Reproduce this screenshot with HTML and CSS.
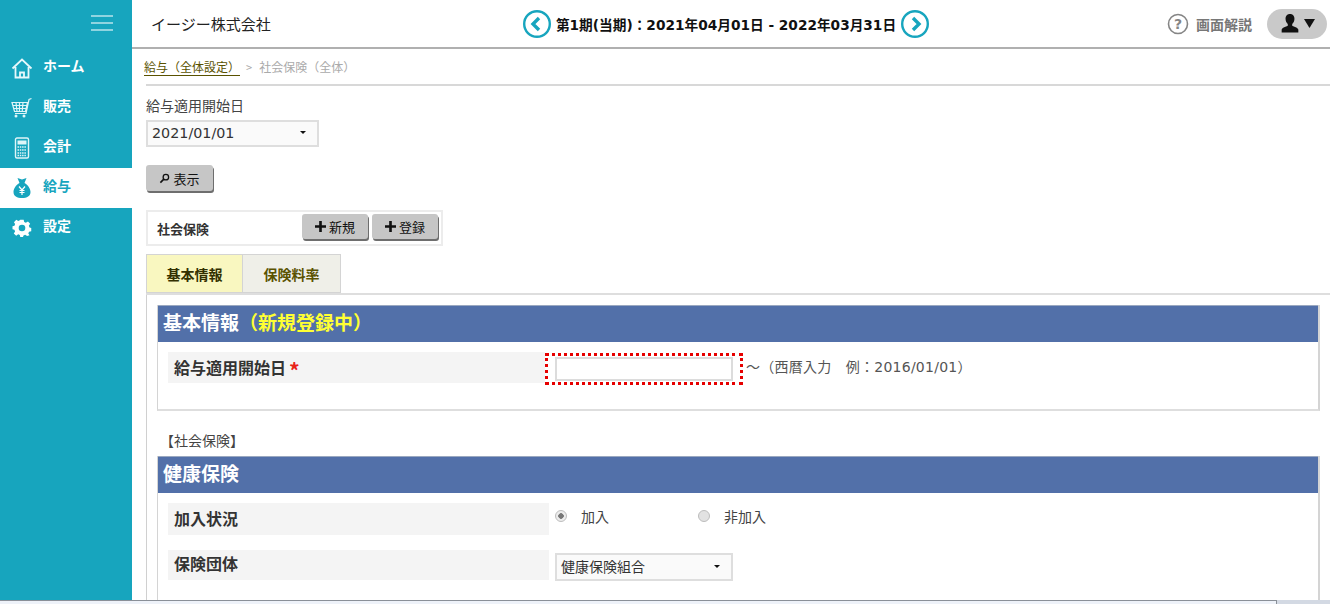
FILE: index.html
```html
<!DOCTYPE html>
<html lang="ja">
<head>
<meta charset="utf-8">
<title>社会保険</title>
<link rel="stylesheet" href="styles.css">
</head>
<body>
<div class="app">
  <nav class="sidebar">
    <div class="burger"><span></span><span></span><span></span></div>
    <ul class="menu">
      <li class="menu-item">
        <svg class="menu-icon" viewBox="0 0 22 22"><path d="M1.5 11.5 11 2.5l9.500 9M4.500 10v10.500h13V10M9 20.500v-5h4v5" fill="none" stroke="#e6f8fb" stroke-width="1.800"/></svg>
        <span>ホーム</span>
      </li>
      <li class="menu-item">
        <svg class="menu-icon" viewBox="0 0 22 22"><path d="M1 5.500h15.500l-2 9H3.500zM20.500 1.500 18 2.500l-3 14H4M5 5.500l1 9M8.500 5.500v9M12 5.500l-.8 9M2 8.500h14M2.800 11.500h12.500" fill="none" stroke="#dff5f8" stroke-width="1.200"/><circle cx="5" cy="19" r="1.500" fill="#dff5f8"/><circle cx="13" cy="19" r="1.500" fill="#dff5f8"/></svg>
        <span>販売</span>
      </li>
      <li class="menu-item">
        <svg class="menu-icon" viewBox="0 0 22 22"><rect x="4.500" y="1" width="13" height="20" rx="1.500" fill="none" stroke="#dff5f8" stroke-width="1.400"/><rect x="6.500" y="3.500" width="9" height="4" fill="#dff5f8"/><path d="M6.500 10h9M6.500 13h9M6.500 16h9M6.500 18.500h9" stroke="#dff5f8" stroke-width="1.300" stroke-dasharray="1.500 .8"/></svg>
        <span>会計</span>
      </li>
      <li class="menu-item active">
        <svg class="menu-icon" viewBox="0 0 22 22"><path d="M6.500 1 11 2.500 15.500 1l-2 5c3.500 2 6 5.500 6 9 0 4-3.500 6-8.500 6s-8.500-2-8.500-6c0-3.500 2.500-7 6-9z" fill="#17a5be"/><path d="M8 9.500l3 3.500 3-3.500M11 13v5M8.500 13.500h5M8.500 15.500h5" fill="none" stroke="#fff" stroke-width="1.200"/></svg>
        <span>給与</span>
      </li>
      <li class="menu-item">
        <svg class="menu-icon" viewBox="0 0 22 22"><path d="M9 2h4l.6 2.700 1.900.8L18 4l2.500 2.800-1.500 2.300.8 2 2 .5v3.800l-2.600.6-.8 1.900 1.400 2.300L17 21l-2.300-1.400-1.900.8-.6 1.600H9l-.5-2.200-1.900-.8L4.300 20.500 1.500 18l1.500-2.300-.8-1.900L0 13.200V9.500l2.300-.6.700-1.800L1.700 4.800 4.400 2l2.300 1.400 1.800-.7z" fill="#fff" transform="translate(1.500 1) scale(.86)"/><circle cx="11" cy="11" r="3.300" fill="#17a5be"/></svg>
        <span>設定</span>
      </li>
    </ul>
  </nav>
  <div class="main">
    <header class="topbar">
      <div class="company">イージー株式会社</div>
      <div class="period">
        <svg class="period-arrow" viewBox="0 0 28 28"><circle cx="14" cy="14" r="12.800" fill="#fff" stroke="#17a5be" stroke-width="2.400"/><path d="M16 8 10 14l6 6" fill="none" stroke="#17a5be" stroke-width="3.400"/></svg>
        <span class="period-text">第1期(当期)：2021年04月01日 - 2022年03月31日</span>
        <svg class="period-arrow" viewBox="0 0 28 28"><circle cx="14" cy="14" r="12.800" fill="#fff" stroke="#17a5be" stroke-width="2.400"/><path d="M12 8l6 6-6 6" fill="none" stroke="#17a5be" stroke-width="3.400"/></svg>
      </div>
      <div class="top-right">
        <div class="help">
          <svg class="help-icon" viewBox="0 0 22 22"><circle cx="11" cy="11" r="9.500" fill="none" stroke="#858585" stroke-width="1.600"/><text x="11" y="15.500" class="help-q">?</text></svg>
          <span>画面解説</span>
        </div>
        <div class="user">
          <svg class="user-icon" viewBox="0 0 18 18"><path d="M9 .5c2.800 0 4 2 4 4.500 0 2-1 3.600-2 4.500v1.500c2 1 5 1.500 5.500 3.500V17h-15v-2.500C2 12.500 5 12 7 11V9.500C6 8.600 5 7 5 5 5 2.500 6.200.5 9 .5z" fill="#111"/></svg>
          <svg class="user-caret" viewBox="0 0 10 8"><path d="M0 0h10L5 8z" fill="#111"/></svg>
        </div>
      </div>
    </header>
    <div class="content">
      <div class="crumbs"><a class="crumb-link">給与（全体設定）</a><span class="crumb-sep">&gt;</span><span class="crumb-now">社会保険（全体）</span></div>
      <label class="start-label">給与適用開始日</label>
      <div class="select select-top"><span>2021/01/01</span><i class="caret"></i></div>
      <button class="btn btn-show">
        <svg class="btn-icon" viewBox="0 0 12 12"><circle cx="7.500" cy="4.500" r="3" fill="none" stroke="#111" stroke-width="1.400"/><path d="M5.300 6.700 1.500 10.500" stroke="#111" stroke-width="1.800"/></svg>表示
      </button>
      <div class="toolbar">
        <span class="toolbar-title">社会保険</span>
        <div class="toolbar-btns">
          <button class="btn btn-small"><svg class="btn-icon" viewBox="0 0 10 10"><path d="M5 0v10M0 5h10" stroke="#111" stroke-width="2.400"/></svg>新規</button>
          <button class="btn btn-small"><svg class="btn-icon" viewBox="0 0 10 10"><path d="M5 0v10M0 5h10" stroke="#111" stroke-width="2.400"/></svg>登録</button>
        </div>
      </div>
      <div class="tabs">
        <div class="tab tab-on">基本情報</div>
        <div class="tab tab-off">保険料率</div>
      </div>
      <div class="panel">
        <section class="box box-basic">
          <h2 class="box-head">基本情報<em>（新規登録中）</em></h2>
          <div class="row row-first">
            <div class="row-label">給与適用開始日<b class="req">*</b></div>
            <div class="date-focus"><input class="date-input" type="text"></div>
            <span class="hint">～（西暦入力　例：2016/01/01）</span>
          </div>
        </section>
        <div class="group-label">【社会保険】</div>
        <section class="box box-health">
          <h2 class="box-head">健康保険</h2>
          <div class="row row-radio">
            <div class="row-label">加入状況</div>
            <div class="radios">
              <span class="radio-item"><i class="radio checked"></i>加入</span>
              <span class="radio-item"><i class="radio"></i>非加入</span>
            </div>
          </div>
          <div class="row row-select">
            <div class="row-label">保険団体</div>
            <div class="select select-row"><span>健康保険組合</span><i class="caret"></i></div>
          </div>
        </section>
      </div>
    </div>
  </div>
</div>
<div class="statusbar"><div class="status-main"></div><div class="status-end"></div></div>
</body>
</html>
```
FILE: styles.css
```css
* { box-sizing: border-box; }
html, body { margin: 0; padding: 0; height: 604px; overflow: hidden; background: #fff; }
body {
  font-family: "DejaVu Sans", "Noto Sans CJK JP", sans-serif;
  color: #333;
  font-size: 13px;
}
.app { display: flex; height: 600px; overflow: hidden; }
.sidebar { width: 132px; flex: none; background: #17a5be; }
.burger { display: flex; flex-direction: column; gap: 5px; align-items: flex-end; padding: 15px 19px 0 0; height: 48px; }
.burger span { display: block; width: 22px; height: 2px; background: #8fd4e0; }
.menu { list-style: none; margin: 0; padding: 0; }
.menu-item {
  display: flex; align-items: center; height: 40px; padding: 0 0 1px 11px;
  font-family: "Noto Sans CJK JP", sans-serif; font-weight: 700; font-size: 14px; color: #fff;
}
.menu-item span { margin-left: 10px; position: relative; top: -3px; }
.menu-icon { width: 22px; height: 22px; flex: none; }
.menu-item.active { background: #fff; color: #17a5be; }
.main { flex: 1; min-width: 0; }
.topbar {
  height: 49px; border-bottom: 2px solid #b0b0b0;
  display: grid; grid-template-columns: 1fr auto 1fr; align-items: center;
  padding: 0 3px 0 19px;
}
.company { font-family: "Noto Sans CJK JP", sans-serif; font-size: 15px; color: #222; }
.period { display: flex; align-items: center; gap: 5px; margin-right: 26px; }
.period-arrow { width: 28px; height: 28px; flex: none; }
.period-text { font-weight: 700; font-size: 13.700px; color: #111; white-space: nowrap; }
.top-right { display: flex; justify-content: flex-end; align-items: center; gap: 15px; }
.help { display: flex; align-items: center; gap: 7px; color: #777; font-weight: 700; font-size: 14px; font-family: "Noto Sans CJK JP", sans-serif; }
.help-icon { width: 22px; height: 22px; }
.help-q { font-size: 14px; fill: #858585; text-anchor: middle; font-family: "DejaVu Sans", sans-serif; }
.user { width: 60px; height: 30px; border-radius: 15px; background: #c9c9c9; display: flex; align-items: center; justify-content: center; gap: 4px; }
.user-icon { width: 20px; height: 21px; }
.user-caret { width: 11px; height: 9px; }
.content { padding: 0 0 0 14px; }
.crumbs {
  height: 37px; padding-top: 9px; border-bottom: 2px solid #d8d8d8;
  font-family: "Noto Sans CJK JP", sans-serif; font-size: 12px; line-height: 18px;
}
.crumb-link { color: #5a5200; border-bottom: 1px solid #5a5200; margin-left: -2px; }
.crumb-sep { color: #aaa; margin: 0 5px 0 6px; font-size: 11px; }
.crumb-now { color: #aaa; margin-left: 2px; }
.start-label {
  display: block; margin-top: 10px; height: 19px; line-height: 19px; font-size: 14px; color: #444;
  font-family: "Noto Sans CJK JP", sans-serif;
}
.select {
  display: flex; align-items: center; justify-content: space-between;
  background: #fafafa; border: 2px solid #dedede; padding: 0 11px 2px 4px; color: #333;
}
.select-top { width: 173px; height: 27px; margin-top: 5px; font-size: 14.300px; }
.select-row { width: 178px; height: 28px; font-family: "Noto Sans CJK JP", sans-serif; font-size: 14px; }
.caret { width: 0; height: 0; border: 3px solid transparent; border-top: 3px solid #111; border-bottom: 0; }
.btn {
  display: flex; align-items: center; justify-content: center; gap: 2px;
  background: #c6c6c6; border: 0; border-radius: 3px; padding: 0;
  box-shadow: 1px 2px 0 #6e6e6e; color: #111;
  font-family: "Noto Sans CJK JP", sans-serif; font-size: 13px;
}
.btn-show { width: 67px; height: 26px; margin-top: 18px; }
.btn-icon { width: 11px; height: 11px; flex: none; margin-right: 1px; }
.toolbar {
  width: 297px; height: 36px; margin-top: 19px; border: 2px solid #ececec;
  display: flex; align-items: center; justify-content: space-between; padding: 0 3px 0 9px;
}
.toolbar-title { font-family: "Noto Sans CJK JP", sans-serif; font-weight: 700; font-size: 13px; color: #333; }
.toolbar-btns { display: flex; gap: 4px; margin-top: -3px; }
.btn-small { width: 66px; height: 25px; }
.tabs { display: flex; margin-top: 8px; height: 41px; border-bottom: 2px solid #dedede; }
.tab {
  width: 97px; height: 39px; border: 1px solid #d4d4d4; border-left: 0; background: #efefe8;
  display: flex; align-items: center; justify-content: center;
  font-family: "Noto Sans CJK JP", sans-serif; font-weight: 700; font-size: 14px; color: #5a5200;
}
.tab-off { width: 98px; }
.tab-on { background: #f9f7c0; border-left: 1px solid #d4d4d4; color: #333000; }
.panel { border-left: 1px solid #d0d0d0; padding: 10px 0 0 10px; height: 306px; }
.box { width: 1163px; border-right: 2px solid #d4d4d4; border-left: 1px solid #d4d4d4; }
.box-basic { height: 106px; border-bottom: 2px solid #dedede; }
.box-head {
  margin: 0; height: 37px; background: #5270a9; border-top: 1px solid #9aa8c0; padding-left: 5px;
  color: #fff; font-family: "Noto Sans CJK JP", sans-serif; font-weight: 700; font-size: 19px; line-height: 32px;
}
.box-head em { font-style: normal; color: #ffff33; }
.row { display: flex; align-items: flex-start; padding-left: 10px; }
.row-label {
  width: 377px; height: 31px; background: #f4f4f4; padding-left: 6px; flex: none;
  font-family: "Noto Sans CJK JP", sans-serif; font-weight: 700; font-size: 16px; line-height: 31px; color: #333;
}
.row-first { margin-top: 10px; }
.req { color: #e8231a; margin-left: 3px; font-weight: 700; font-size: 21px; line-height: 0; position: relative; top: 5px; }
.date-focus { border: 3px dotted #e60000; width: 198px; height: 32px; padding: 1px 7px; margin-top: 1px; flex: none; }
.date-input { display: block; width: 178px; height: 24px; border: 2px solid #dcdcdc; background: #fff; padding: 0; }
.hint { margin: 4px 0 0 3px; font-family: "DejaVu Sans", "Noto Sans CJK JP", sans-serif; font-size: 14px; letter-spacing: .25px; color: #555; white-space: nowrap; }
.group-label { margin-top: 20px; height: 25px; line-height: 19px; font-family: "Noto Sans CJK JP", sans-serif; font-size: 14px; color: #444; padding-left: 3px; }
.box-health { height: 150px; }
.row-radio { margin-top: 10px; height: 47px; }
.row-radio .row-label { width: 381px; height: 32px; line-height: 30px; }
.row-select { height: 31px; }
.row-select .row-label { width: 381px; height: 30px; line-height: 27px; }
.radios { display: flex; margin-left: 6px; padding-top: 3px; font-family: "Noto Sans CJK JP", sans-serif; font-size: 14px; color: #444; }
.radio-item { display: flex; align-items: center; width: 143px; height: 20px; }
.radio {
  width: 12px; height: 12px; border-radius: 50%; background: #e2e2e2; border: 1px solid #bdbdbd; margin-right: 14px;
}
.radio.checked { background: radial-gradient(circle, #777 0 2.500px, #ececec 3px); }
.row-select .select-row { margin: 3px 0 0 6px; }
.statusbar { display: flex; height: 4px; }
.status-main { width: 1277px; background: #eef2f9; border-top: 1px solid #8a9098; border-right: 1px solid #8a9098; }
.status-end { flex: 1; background: #d3d9e3; }
```
